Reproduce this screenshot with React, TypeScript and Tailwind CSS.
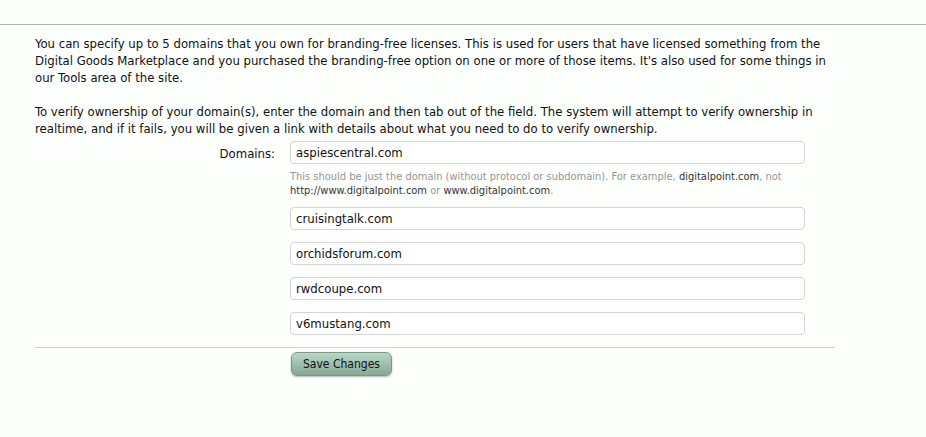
import React from 'react';

const domains = ['aspiescentral.com', 'cruisingtalk.com', 'orchidsforum.com', 'rwdcoupe.com', 'v6mustang.com'];

function DomainInput({ value }: { value: string }) {
  return (
    <input
      type="text"
      defaultValue={value}
      className="w-[515px] h-[23px] px-[5px] rounded-[4px] border border-[#d4d4d4] bg-white text-[13px] text-[#111] outline-none"
    />
  );
}

export default function App() {
  return (
    <div className="min-h-screen bg-[#fdfffd] text-[13px] text-[#111] font-['DejaVu_Sans_Condensed','DejaVu_Sans',sans-serif]">
      <div className="h-[25px] border-b border-[#a8b8b2]" />

      <div className="pl-[35px] pt-[10px]">
        <div className="w-[802px]">
          <p className="leading-[17px]">
            You can specify up to 5 domains that you own for branding-free licenses. This is used for users that have licensed something from the
            Digital Goods Marketplace and you purchased the branding-free option on one or more of those items. It's also used for some things in
            our Tools area of the site.
          </p>
          <p className="leading-[17px] mt-[17px]">
            To verify ownership of your domain(s), enter the domain and then tab out of the field. The system will attempt to verify ownership in
            realtime, and if it fails, you will be given a link with details about what you need to do to verify ownership.
          </p>
        </div>

        <div className="w-[800px] mt-[4px]">
          <div className="flex">
            <div className="w-[255px] shrink-0 pr-[15px] text-right pt-[3px]">Domains:</div>
            <div className="flex flex-col">
              <DomainInput value={domains[0]} />
              <p className="mt-[6px] text-[11px] leading-[14px] text-[#969696] w-[500px]">
                This should be just the domain (without protocol or subdomain). For example, <span className="text-[#333]">digitalpoint.com</span>, not{' '}
                <span className="text-[#333]">http://www.digitalpoint.com</span> or <span className="text-[#333]">www.digitalpoint.com</span>.
              </p>
              <div className="flex flex-col gap-[12px] mt-[9px]">
                {domains.slice(1).map((d) => (
                  <DomainInput key={d} value={d} />
                ))}
              </div>
            </div>
          </div>
          <div className="mt-[12px] border-t border-[#c9d6cf]" />
          <div className="flex mt-[4px]">
            <div className="w-[256px] shrink-0" />
            <button className="h-[24px] px-[11px] rounded-[6px] border border-[#7a9a88] bg-gradient-to-b from-[#b9d6c6] to-[#86a894] text-[12px] text-[#111] shadow-[0_1px_2px_rgba(0,0,0,0.3)]">
              Save Changes
            </button>
          </div>
        </div>
      </div>
    </div>
  );
}
